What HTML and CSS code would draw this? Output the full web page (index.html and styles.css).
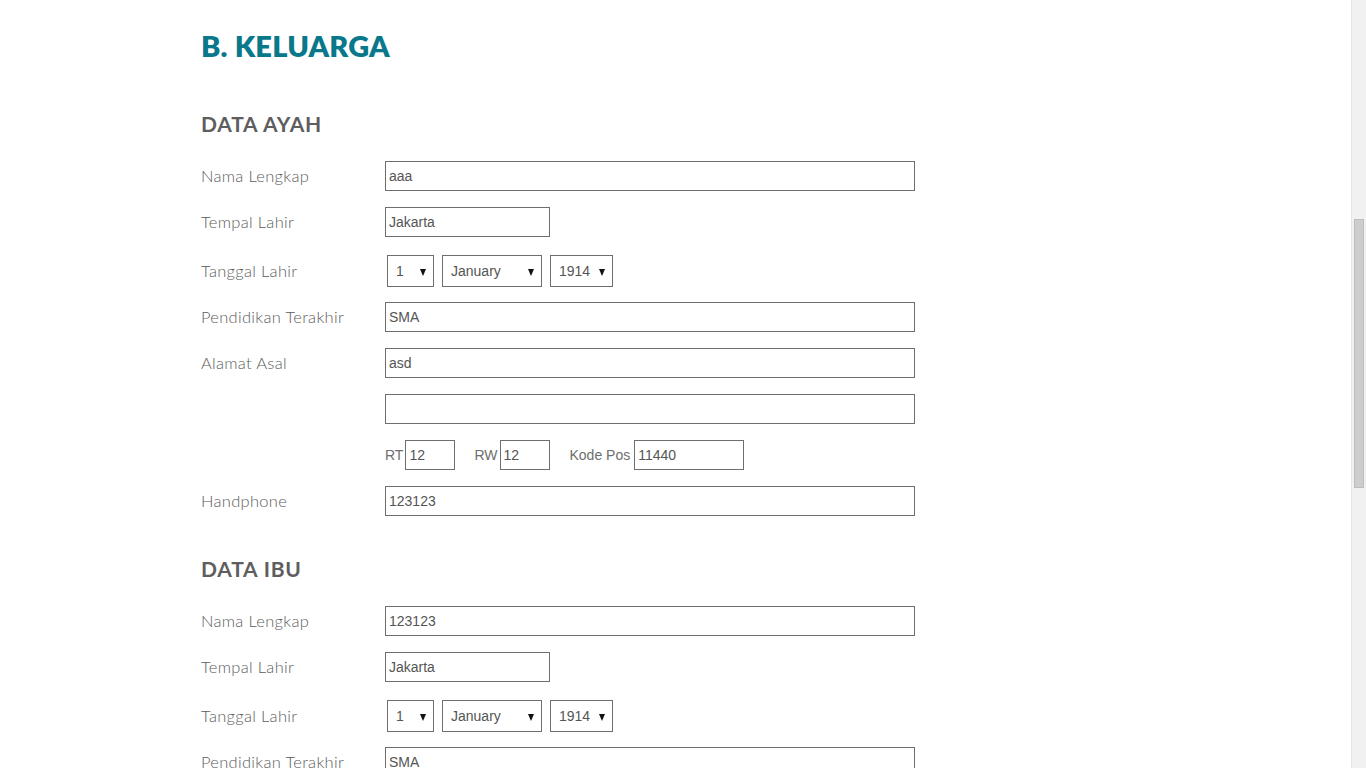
FILE: index.html
```html
<!DOCTYPE html>
<html>
<head>
<meta charset="utf-8">
<link rel="stylesheet" href="styles.css">
</head>
<body>
<main class="page">
  <h1 class="title">B. KELUARGA</h1>

  <section class="group">
    <h2 class="subtitle">DATA AYAH</h2>
    <div class="row"><label class="lbl">Nama Lengkap</label><input class="inp wide" value="aaa"></div>
    <div class="row"><label class="lbl">Tempal Lahir</label><input class="inp mid" value="Jakarta"></div>
    <div class="row selrow"><label class="lbl">Tanggal Lahir</label>
      <div class="sels">
        <div class="sel s-day"><span>1</span></div>
        <div class="sel s-mon"><span>January</span></div>
        <div class="sel s-yr"><span>1914</span></div>
      </div>
    </div>
    <div class="row"><label class="lbl">Pendidikan Terakhir</label><input class="inp wide" value="SMA"></div>
    <div class="row"><label class="lbl">Alamat Asal</label><input class="inp wide" value="asd"></div>
    <div class="row"><span class="lbl"></span><input class="inp wide" value=""></div>
    <div class="row"><span class="lbl"></span>
      <div class="addr">
        <span class="mini">RT</span><input class="inp small" value="12">
        <span class="mini gap">RW</span><input class="inp small" value="12">
        <span class="mini gap kp">Kode Pos</span><input class="inp pos" value="11440">
      </div>
    </div>
    <div class="row"><label class="lbl">Handphone</label><input class="inp wide" value="123123"></div>
  </section>

  <section class="group">
    <h2 class="subtitle">DATA IBU</h2>
    <div class="row"><label class="lbl">Nama Lengkap</label><input class="inp wide" value="123123"></div>
    <div class="row"><label class="lbl">Tempal Lahir</label><input class="inp mid" value="Jakarta"></div>
    <div class="row selrow"><label class="lbl">Tanggal Lahir</label>
      <div class="sels">
        <div class="sel s-day"><span>1</span></div>
        <div class="sel s-mon"><span>January</span></div>
        <div class="sel s-yr"><span>1914</span></div>
      </div>
    </div>
    <div class="row"><label class="lbl">Pendidikan Terakhir</label><input class="inp wide" value="SMA"></div>
    <div class="row"><label class="lbl">Alamat Asal</label><input class="inp wide" value="asd"></div>
  </section>
</main>
<div class="scrollbar"><div class="thumb"></div></div>
</body>
</html>
```
FILE: styles.css
```css
html, body {
  margin: 0;
  padding: 0;
  overflow: hidden;
  height: 768px;
  background: #fff;
}
.page {
  padding: 0 0 0 201px;
  font-family: "Lato", "Open Sans", sans-serif;
}
.title {
  margin: 0;
  padding-top: 28px;
  font-size: 29px;
  line-height: 36px;
  font-weight: 800;
  color: #08788a;
  letter-spacing: 0.2px;
}
.subtitle {
  margin: 0;
  font-size: 21px;
  line-height: 26px;
  font-weight: 700;
  color: #5e5e5e;
  letter-spacing: 0.8px;
}
.group:first-of-type .subtitle { margin-top: 47px; margin-bottom: 24px; }
.group + .group .subtitle { margin-top: 40px; margin-bottom: 24px; }
.row {
  display: flex;
  align-items: center;
  margin-bottom: 16px;
  height: 30px;
}
.row.selrow {
  height: 32px;
  margin-top: 18px;
  margin-bottom: 15px;
}
.lbl {
  width: 184px;
  flex: none;
  font-size: 16.5px;
  font-weight: 300;
  color: #5c5c5c;
  letter-spacing: 0.3px;
}
.inp {
  box-sizing: border-box;
  height: 30px;
  border: 1px solid #6e6e6e;
  padding: 0 3px;
  margin: 0;
  font-family: "Liberation Sans", Arial, sans-serif;
  font-size: 14px;
  color: #555;
  background: #fff;
  outline: none;
}
.wide { width: 530px; }
.mid { width: 165px; }
.small { width: 50px; }
.pos { width: 110px; }
.sels {
  display: flex;
  gap: 8px;
  margin-left: 2px;
}
.sel {
  position: relative;
  box-sizing: border-box;
  height: 32px;
  border: 1px solid #6e6e6e;
  display: flex;
  align-items: center;
  padding-left: 8px;
  font-family: "Liberation Sans", Arial, sans-serif;
  font-size: 14px;
  color: #555;
}
.sel::after {
  content: "";
  position: absolute;
  right: 7px;
  top: 13px;
  border-left: 3.5px solid transparent;
  border-right: 3.5px solid transparent;
  border-top: 7px solid #111;
}
.s-day { width: 47px; }
.s-mon { width: 100px; }
.s-yr { width: 63px; }
.addr {
  display: flex;
  align-items: center;
}
.mini {
  font-family: "Liberation Sans", Arial, sans-serif;
  font-size: 14px;
  color: #6e6e6e;
  margin-right: 2px;
}
.mini.gap { margin-left: 19px; margin-right: 2px; }
.mini.kp { margin-left: 20px; margin-right: 4px; }
.scrollbar {
  position: fixed;
  top: 0;
  right: 0;
  width: 15px;
  height: 768px;
  background: #f1f1f1;
  border-left: 1px solid #e6e6e6;
  box-sizing: border-box;
}
.thumb {
  position: absolute;
  left: 2px;
  top: 219px;
  width: 10px;
  height: 269px;
  background: #cdcdcd;
  border: 1px solid #bdbdbd;
  box-sizing: border-box;
}
```
